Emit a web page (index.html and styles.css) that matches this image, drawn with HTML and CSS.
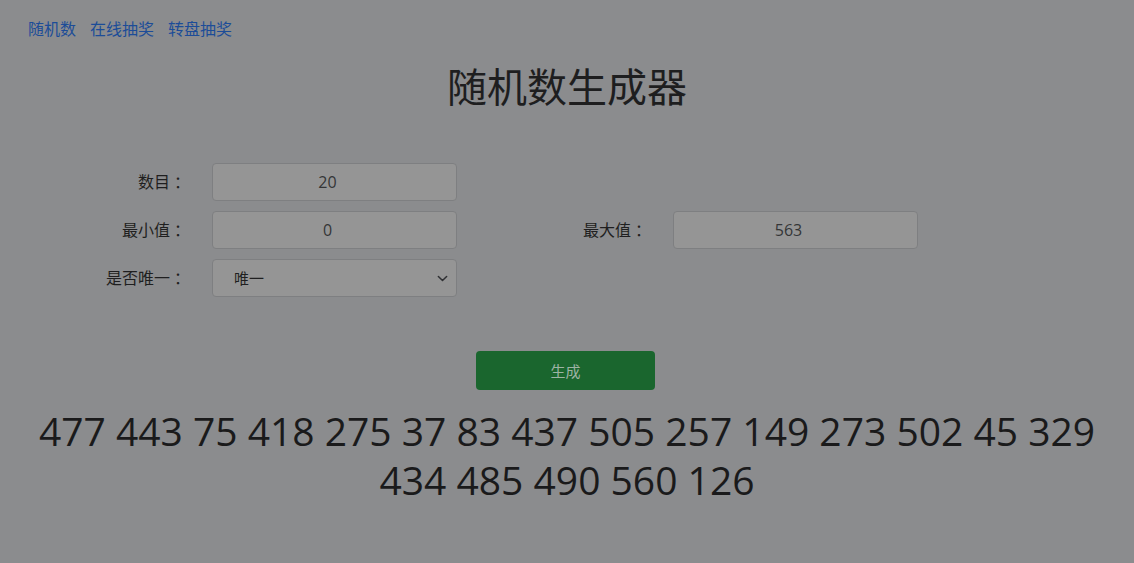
FILE: index.html
```html
<!DOCTYPE html>
<html lang="zh-CN">
<head>
    <meta charset="UTF-8">
    <meta name="viewport" content="width=device-width, initial-scale=1.0">
    <title>随机数生成器</title>
    <link rel="stylesheet" href="styles.css">
</head>
<body>
    <nav class="top-nav">
        <a href="#">随机数</a>
        <a href="#">在线抽奖</a>
        <a href="#">转盘抽奖</a>
    </nav>

    <h1 class="page-title">随机数生成器</h1>

    <form class="gen-form" onsubmit="return false">
        <label class="form-label" for="count">数目<span class="colon">：</span></label>
        <input class="form-input" type="text" id="count" value="20">
        <span></span><span></span>

        <label class="form-label" for="min">最小值<span class="colon">：</span></label>
        <input class="form-input" type="text" id="min" value="0">
        <label class="form-label" for="max">最大值<span class="colon">：</span></label>
        <input class="form-input" type="text" id="max" value="563">

        <label class="form-label" for="unique">是否唯一<span class="colon">：</span></label>
        <div class="select-wrap">
            <select class="form-select" id="unique">
                <option>唯一</option>
                <option>不唯一</option>
            </select>
            <svg class="select-arrow" width="11" height="11" viewBox="0 0 16 16">
                <path d="M2 5l6 6 6-6" fill="none" stroke="#2f3033" stroke-width="2.2" stroke-linecap="round" stroke-linejoin="round"/>
            </svg>
        </div>
    </form>

    <div class="actions">
        <button type="button" class="btn-generate">生成</button>
    </div>

    <div class="result">477 443 75 418 275 37 83 437 505 257 149 273 502 45 329 434 485 490 560 126</div>
</body>
</html>
```

FILE: styles.css
```css
body {
    font-family: "Open Sans", "Noto Sans CJK SC", sans-serif;
    background-color: #8b8c8e;
    color: #1c1c1d;
    margin: 0;
    padding: 0;
}

.top-nav {
    display: flex;
    gap: 14px;
    padding: 17px 28px 0;
    font-size: 16px;
    line-height: 24px;
}

.top-nav a {
    color: #1c4c98;
    text-decoration: none;
}

.page-title {
    margin: 22px 0 0;
    text-align: center;
    font-size: 40px;
    font-weight: 400;
    line-height: 48px;
    color: #1e1e1f;
}

.gen-form {
    display: grid;
    grid-template-columns: 112px 245px 216px 245px;
    row-gap: 10px;
    margin: 52px 0 0 100px;
}

.form-label {
    text-align: right;
    padding-right: 22px;
    font-size: 16px;
    line-height: 38px;
    color: #1f1f20;
}

.colon {
    padding-left: 4px;
}

.form-input,
.form-select {
    box-sizing: border-box;
    width: 100%;
    height: 38px;
    background-color: #959595;
    border: 1px solid #7e7f81;
    border-radius: 4px;
    font-family: "Open Sans", "Noto Sans CJK SC", sans-serif;
    font-size: 16px;
    color: #343537;
}

.form-input {
    text-align: center;
    padding: 0 19px 0 5px;
}

.select-wrap {
    position: relative;
}

.form-select {
    appearance: none;
    -webkit-appearance: none;
    padding: 0 36px 0 21px;
    font-size: 15px;
    color: #1f1f20;
}

.select-arrow {
    position: absolute;
    right: 9px;
    top: 14px;
    pointer-events: none;
}

.actions {
    display: flex;
    justify-content: center;
    margin-top: 54px;
    padding-right: 3px;
}

.btn-generate {
    width: 179px;
    height: 39px;
    background-color: #1a662e;
    color: #9db3a4;
    border: none;
    border-radius: 4px;
    font-family: "Open Sans", "Noto Sans CJK SC", sans-serif;
    font-size: 15px;
    cursor: pointer;
}

.result {
    margin-top: 16px;
    padding: 0 12px;
    text-align: center;
    font-size: 39px;
    line-height: 49px;
    color: #1a1a1b;
}
```
